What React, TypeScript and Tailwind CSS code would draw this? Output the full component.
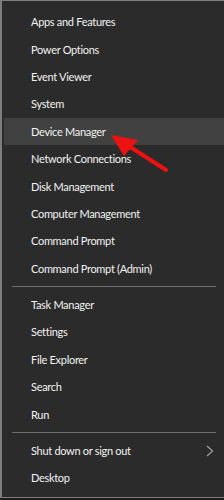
import React from "react";

const groups: string[][] = [
  [
    "Apps and Features",
    "Power Options",
    "Event Viewer",
    "System",
    "Device Manager",
    "Network Connections",
    "Disk Management",
    "Computer Management",
    "Command Prompt",
    "Command Prompt (Admin)",
  ],
  ["Task Manager", "Settings", "File Explorer", "Search", "Run"],
  ["Shut down or sign out", "Desktop"],
];

function Row({ label }: { label: string }) {
  const active = label === "Device Manager";
  const sub = label === "Shut down or sign out";
  return (
    <div
      className={`flex h-[27.4px] items-center justify-between pl-[27px] pr-[9px] ${
        active ? "bg-[#414141]" : ""
      }`}
    >
      <span className="text-[11px] leading-none tracking-[-0.3px] text-[#f2f2f2]">{label}</span>
      {sub && (
        <svg width="8" height="12" viewBox="0 0 8 12" className="mr-[1px]">
          <path d="M1 1 L6.5 6 L1 11" fill="none" stroke="#a89c94" strokeWidth="1.2" />
        </svg>
      )}
    </div>
  );
}

export default function App() {
  return (
    <div className="relative h-[500px] w-[224px] overflow-hidden bg-[#1c1c1c]" style={{ fontFamily: 'Lato, "Noto Sans", sans-serif' }}>
      <div className="flex h-[498px] flex-col border-b border-l-2 border-t border-[#7d7d7d] bg-[#2b2b2b] pl-[2px] pt-[7px]">
        {groups.map((g, gi) => (
          <div key={gi}>
            {gi > 0 && <div className="mx-[8px] my-[4px] h-px bg-[#6e6e6e]" />}
            {g.map((l) => (
              <Row key={l} label={l} />
            ))}
          </div>
        ))}
      </div>
      <svg className="absolute left-0 top-0" width="224" height="500" viewBox="0 0 224 500">
        <line x1="124" y1="143" x2="166" y2="170" stroke="#ee1111" strokeWidth="4" strokeLinecap="round" />
        <polygon points="111,135 138,140 124,156" fill="#ee1111" />
      </svg>
    </div>
  );
}
